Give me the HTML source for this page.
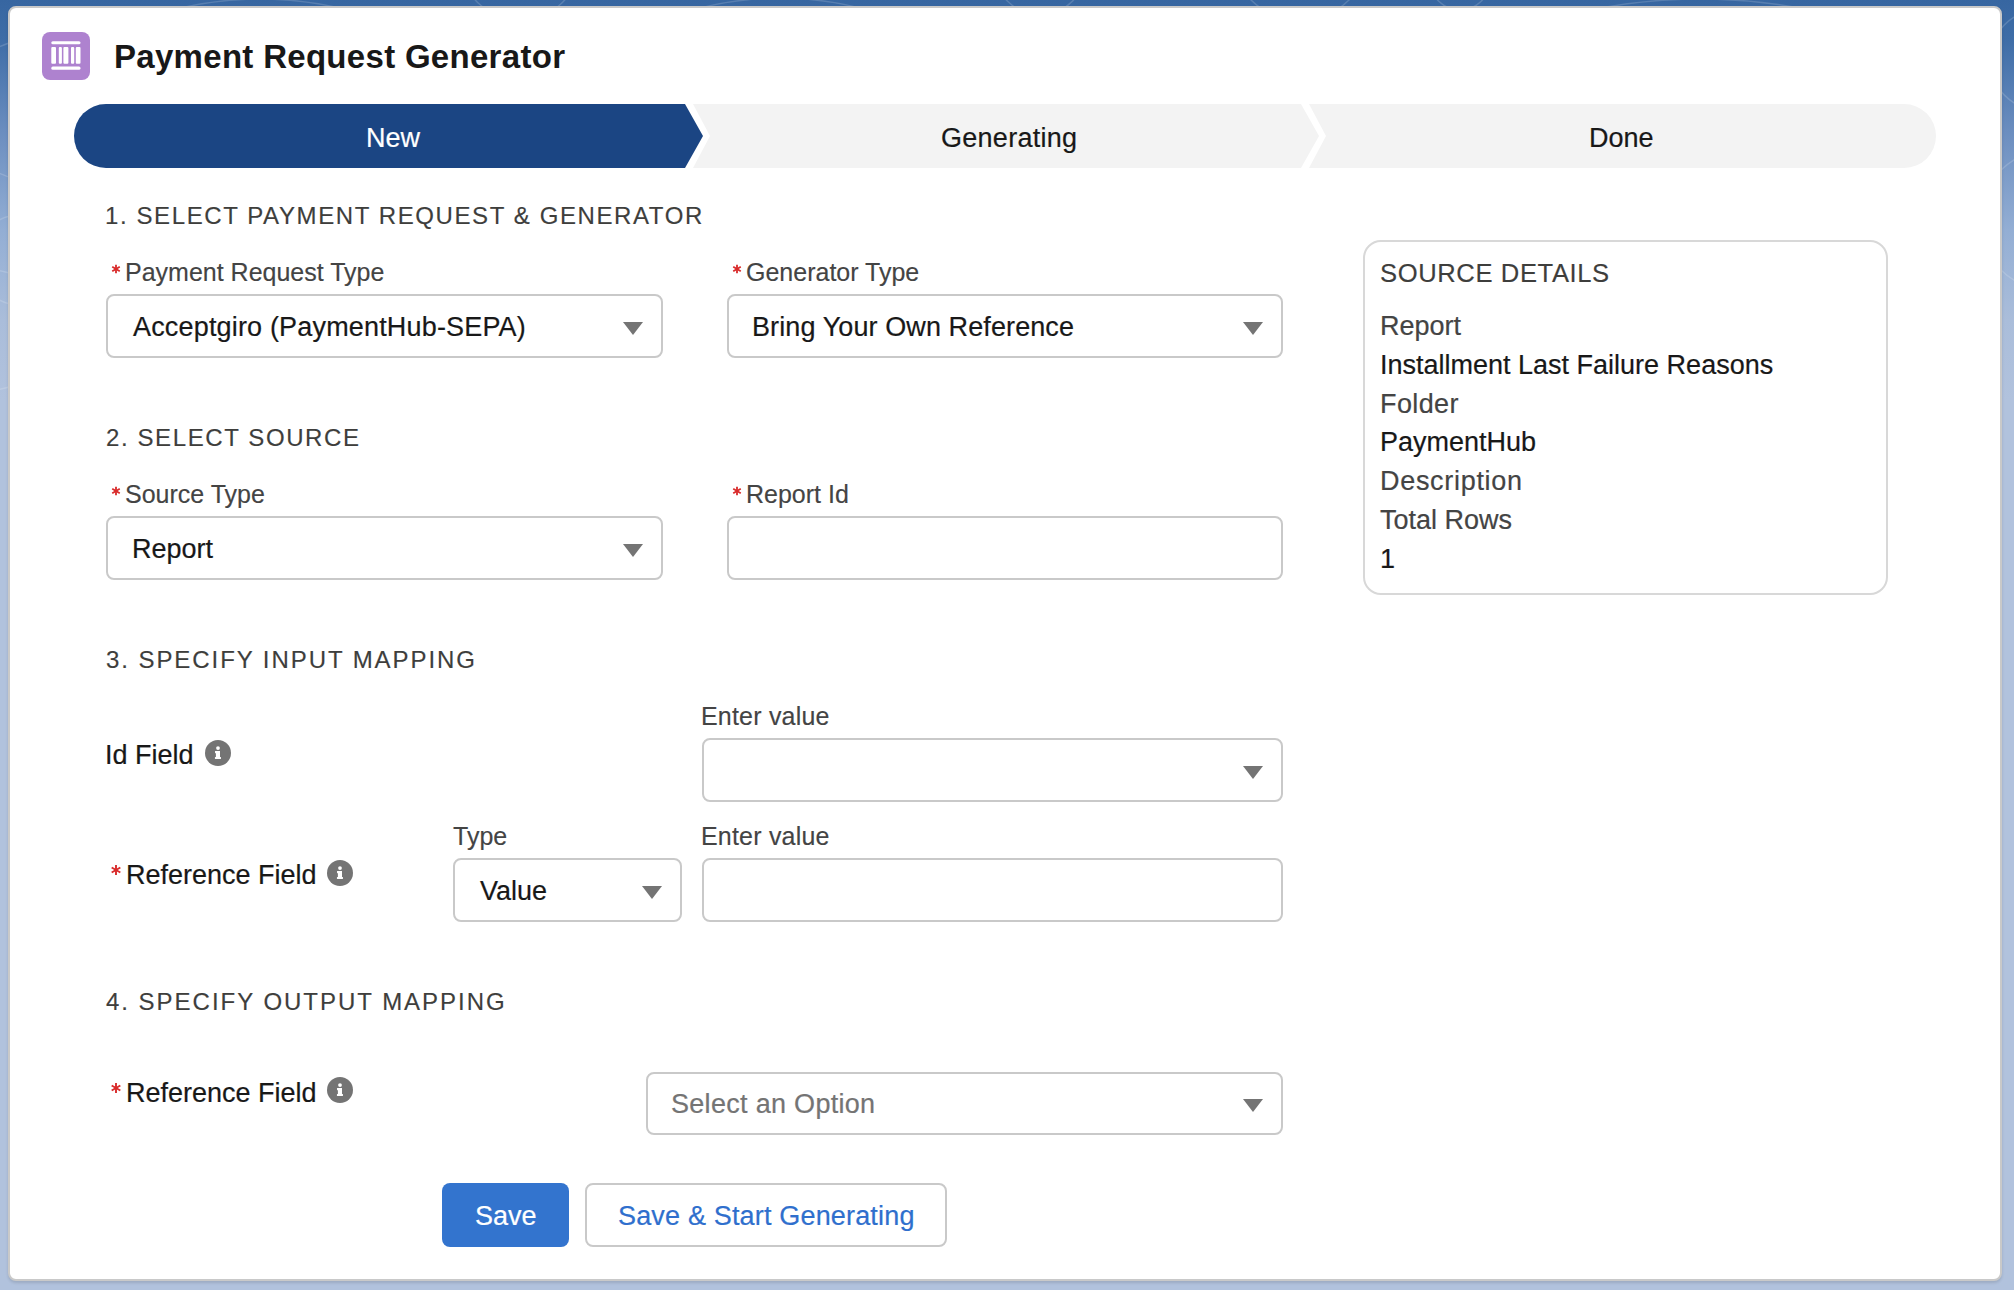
<!DOCTYPE html>
<html>
<head>
<meta charset="utf-8">
<style>
html,body{margin:0;padding:0;}
body{width:2014px;height:1290px;overflow:hidden;position:relative;font-family:"Liberation Sans",sans-serif;
  background:linear-gradient(to bottom,#3766a1 0px,#3e6da7 40px,#6a8dbf 130px,#93aed4 230px,#aabdda 320px,#b1c2dd 400px,#b1c2dd 1290px);}
.card{position:absolute;left:8px;top:6px;width:1990px;height:1271px;background:#fff;border:2px solid #c9c9c9;border-radius:8px;box-shadow:0 2px 3px rgba(0,0,0,0.12);}
.t{position:absolute;white-space:nowrap;line-height:1;}
.sec{font-size:24px;letter-spacing:1.6px;color:#3e3e3c;-webkit-text-stroke:0.15px currentColor;}
.lbl{font-size:25px;color:#444444;-webkit-text-stroke:0.15px currentColor;}
.val{font-size:27px;color:#181818;-webkit-text-stroke:0.2px currentColor;}
.req{position:absolute;color:#c23934;font-size:25px;line-height:1;}
.box{position:absolute;border:2px solid #c9c9c9;border-radius:8px;background:#fff;box-sizing:border-box;}
.tri{position:absolute;width:0;height:0;border-left:10px solid transparent;border-right:10px solid transparent;border-top:13px solid #747474;}
.info{position:absolute;width:26px;height:26px;}
</style>
</head>
<body>
<svg style="position:absolute;left:0;top:0" width="2014" height="420" viewBox="0 0 2014 420">
<g fill="none" stroke="rgba(255,255,255,0.16)" stroke-width="1.5">
<circle cx="30" cy="110" r="70"/><circle cx="20" cy="260" r="45"/><circle cx="-10" cy="330" r="60"/>
<circle cx="520" cy="-40" r="60"/><circle cx="1040" cy="-30" r="45"/><circle cx="1300" cy="-50" r="70"/>
<circle cx="1460" cy="-20" r="30"/><circle cx="2040" cy="60" r="50"/><circle cx="2050" cy="220" r="70"/>
<path d="M180,8 Q260,-10 340,8"/><path d="M700,8 Q780,-12 860,8"/><path d="M1600,8 Q1700,-10 1800,8"/>
</g></svg>
<div class="card"></div>

<!-- header icon -->
<svg style="position:absolute;left:42px;top:32px" width="48" height="48" viewBox="0 0 48 48">
  <rect x="0" y="0" width="48" height="48" rx="8" fill="#ae82cf"/>
  <rect x="9.3" y="9.3" width="29.2" height="3" rx="1.5" fill="#fff"/>
  <rect x="9.3" y="34.5" width="29.2" height="3.2" rx="1.5" fill="#fff"/>
  <rect x="9.3" y="15" width="4.7" height="16.8" rx="1" fill="#fff"/>
  <rect x="16.8" y="15" width="3.1" height="16.8" rx="1" fill="#fff"/>
  <rect x="21.4" y="15" width="5" height="16.8" rx="1" fill="#fff"/>
  <rect x="29" y="15" width="3.2" height="16.8" rx="1" fill="#fff"/>
  <rect x="33.8" y="15" width="4.7" height="16.8" rx="1" fill="#fff"/>
</svg>
<div class="t" style="left:114px;top:40px;font-size:33px;font-weight:bold;color:#181818;letter-spacing:0.3px;">Payment Request Generator</div>

<!-- path -->
<svg style="position:absolute;left:0;top:0" width="2014" height="200">
  <path d="M106,104 L685,104 L703,136 L685,168 L106,168 A32,32 0 0 1 106,104 Z" fill="#1b4583"/>
  <path d="M693,104 L1301,104 L1319,136 L1301,168 L693,168 L710,136 Z" fill="#f3f3f3"/>
  <path d="M1309,104 L1904,104 A32,32 0 0 1 1904,168 L1309,168 L1326,136 Z" fill="#f3f3f3"/>
</svg>
<div class="t" style="left:366px;top:125px;font-size:27px;color:#fff;-webkit-text-stroke:0.2px currentColor;">New</div>
<div class="t" style="left:941px;top:125px;letter-spacing:0.27px;font-size:27px;color:#181818;-webkit-text-stroke:0.2px currentColor;">Generating</div>
<div class="t" style="left:1589px;top:125px;font-size:27px;color:#181818;-webkit-text-stroke:0.2px currentColor;">Done</div>


<!-- section 1 -->
<div class="t sec" style="left:105px;top:204px;">1. SELECT PAYMENT REQUEST &amp; GENERATOR</div>
<svg style="position:absolute;left:109.8px;top:263px" width="12" height="12" viewBox="-6.9 -6.9 13.8 13.8"><g stroke="#d92b2b" stroke-width="2.1"><line x1="0" y1="-5" x2="0" y2="5"/><line x1="-4.33" y1="-2.5" x2="4.33" y2="2.5"/><line x1="-4.33" y1="2.5" x2="4.33" y2="-2.5"/></g></svg>
<div class="t lbl" style="left:125px;top:260px;">Payment Request Type</div>
<div class="box" style="left:106px;top:294px;width:557px;height:64px;"></div>
<div class="t val" style="left:133px;top:314px;letter-spacing:0.17px;">Acceptgiro (PaymentHub-SEPA)</div>
<div class="tri" style="left:623px;top:322px;"></div>

<svg style="position:absolute;left:730.5px;top:263px" width="12" height="12" viewBox="-6.9 -6.9 13.8 13.8"><g stroke="#d92b2b" stroke-width="2.1"><line x1="0" y1="-5" x2="0" y2="5"/><line x1="-4.33" y1="-2.5" x2="4.33" y2="2.5"/><line x1="-4.33" y1="2.5" x2="4.33" y2="-2.5"/></g></svg>
<div class="t lbl" style="left:746px;top:260px;">Generator Type</div>
<div class="box" style="left:727px;top:294px;width:556px;height:64px;"></div>
<div class="t val" style="left:752px;top:314px;letter-spacing:0.1px;">Bring Your Own Reference</div>
<div class="tri" style="left:1243px;top:322px;"></div>

<!-- source details -->
<div class="box" style="left:1363px;top:240px;width:525px;height:355px;border-radius:18px;border-color:#d8d8d8;"></div>
<div class="t sec" style="left:1380px;top:261px;font-size:25.6px;letter-spacing:0.6px;">SOURCE DETAILS</div>
<div class="t val" style="left:1380px;top:313px;color:#444;">Report</div>
<div class="t val" style="left:1380px;top:352px;">Installment Last Failure Reasons</div>
<div class="t val" style="left:1380px;top:391px;color:#444;letter-spacing:0.4px;">Folder</div>
<div class="t val" style="left:1380px;top:429px;">PaymentHub</div>
<div class="t val" style="left:1380px;top:468px;color:#444;letter-spacing:0.7px;">Description</div>
<div class="t val" style="left:1380px;top:507px;color:#444;">Total Rows</div>
<div class="t val" style="left:1380px;top:546px;">1</div>

<!-- section 2 -->
<div class="t sec" style="left:106px;top:426px;">2. SELECT SOURCE</div>
<svg style="position:absolute;left:109.8px;top:484.5px" width="12" height="12" viewBox="-6.9 -6.9 13.8 13.8"><g stroke="#d92b2b" stroke-width="2.1"><line x1="0" y1="-5" x2="0" y2="5"/><line x1="-4.33" y1="-2.5" x2="4.33" y2="2.5"/><line x1="-4.33" y1="2.5" x2="4.33" y2="-2.5"/></g></svg>
<div class="t lbl" style="left:125px;top:482px;">Source Type</div>
<div class="box" style="left:106px;top:516px;width:557px;height:64px;"></div>
<div class="t val" style="left:132px;top:536px;">Report</div>
<div class="tri" style="left:623px;top:544px;"></div>

<svg style="position:absolute;left:730.5px;top:484.5px" width="12" height="12" viewBox="-6.9 -6.9 13.8 13.8"><g stroke="#d92b2b" stroke-width="2.1"><line x1="0" y1="-5" x2="0" y2="5"/><line x1="-4.33" y1="-2.5" x2="4.33" y2="2.5"/><line x1="-4.33" y1="2.5" x2="4.33" y2="-2.5"/></g></svg>
<div class="t lbl" style="left:746px;top:482px;">Report Id</div>
<div class="box" style="left:727px;top:516px;width:556px;height:64px;"></div>

<!-- section 3 -->
<div class="t sec" style="left:106px;top:648px;letter-spacing:1.93px;">3. SPECIFY INPUT MAPPING</div>
<div class="t val" style="left:105px;top:742px;">Id Field</div>
<svg class="info" style="left:205px;top:740px;" viewBox="0 0 26 26"><circle cx="13" cy="13" r="13" fill="#747474"/><circle cx="13" cy="8.1" r="1.9" fill="#fff"/><path d="M10,11.2 Q10,11 10.3,11 H15 V17 H15.6 Q16,17 16,17.4 V18.5 Q16,18.9 15.6,18.9 H10.3 Q9.9,18.9 9.9,18.5 V17.4 Q9.9,17 10.3,17 H10.9 V13.4 Q10,13.2 10,12.6 Z" fill="#fff"/></svg>
<div class="t lbl" style="left:701px;top:704px;letter-spacing:0.2px;">Enter value</div>
<div class="box" style="left:702px;top:738px;width:581px;height:64px;"></div>
<div class="tri" style="left:1243px;top:766px;"></div>

<svg style="position:absolute;left:110.2px;top:864px" width="12" height="12" viewBox="-6 -6 12 12"><g stroke="#d92b2b" stroke-width="1.9"><line x1="0" y1="-5" x2="0" y2="5"/><line x1="-4.33" y1="-2.5" x2="4.33" y2="2.5"/><line x1="-4.33" y1="2.5" x2="4.33" y2="-2.5"/></g></svg>
<div class="t val" style="left:126px;top:862px;">Reference Field</div>
<svg class="info" style="left:327px;top:860px;" viewBox="0 0 26 26"><circle cx="13" cy="13" r="13" fill="#747474"/><circle cx="13" cy="8.1" r="1.9" fill="#fff"/><path d="M10,11.2 Q10,11 10.3,11 H15 V17 H15.6 Q16,17 16,17.4 V18.5 Q16,18.9 15.6,18.9 H10.3 Q9.9,18.9 9.9,18.5 V17.4 Q9.9,17 10.3,17 H10.9 V13.4 Q10,13.2 10,12.6 Z" fill="#fff"/></svg>
<div class="t lbl" style="left:453px;top:824px;">Type</div>
<div class="box" style="left:453px;top:858px;width:229px;height:64px;"></div>
<div class="t val" style="left:480px;top:878px;">Value</div>
<div class="tri" style="left:642px;top:886px;"></div>
<div class="t lbl" style="left:701px;top:824px;letter-spacing:0.2px;">Enter value</div>
<div class="box" style="left:702px;top:858px;width:581px;height:64px;"></div>

<!-- section 4 -->
<div class="t sec" style="left:106px;top:990px;letter-spacing:1.98px;">4. SPECIFY OUTPUT MAPPING</div>
<svg style="position:absolute;left:110.2px;top:1082px" width="12" height="12" viewBox="-6 -6 12 12"><g stroke="#d92b2b" stroke-width="1.9"><line x1="0" y1="-5" x2="0" y2="5"/><line x1="-4.33" y1="-2.5" x2="4.33" y2="2.5"/><line x1="-4.33" y1="2.5" x2="4.33" y2="-2.5"/></g></svg>
<div class="t val" style="left:126px;top:1080px;">Reference Field</div>
<svg class="info" style="left:327px;top:1077px;" viewBox="0 0 26 26"><circle cx="13" cy="13" r="13" fill="#747474"/><circle cx="13" cy="8.1" r="1.9" fill="#fff"/><path d="M10,11.2 Q10,11 10.3,11 H15 V17 H15.6 Q16,17 16,17.4 V18.5 Q16,18.9 15.6,18.9 H10.3 Q9.9,18.9 9.9,18.5 V17.4 Q9.9,17 10.3,17 H10.9 V13.4 Q10,13.2 10,12.6 Z" fill="#fff"/></svg>
<div class="box" style="left:646px;top:1072px;width:637px;height:63px;"></div>
<div class="t val" style="left:671px;top:1091px;color:#747474;letter-spacing:0.3px;">Select an Option</div>
<div class="tri" style="left:1243px;top:1099px;"></div>

<!-- buttons -->
<div style="position:absolute;left:442px;top:1183px;width:127px;height:64px;border-radius:8px;background:#3374ce;"></div>
<div class="t val" style="left:475px;top:1203px;color:#fff;">Save</div>
<div class="box" style="left:585px;top:1183px;width:362px;height:64px;"></div>
<div class="t val" style="left:618px;top:1203px;color:#2f6fcd;letter-spacing:0.17px;">Save &amp; Start Generating</div>

</body>
</html>
